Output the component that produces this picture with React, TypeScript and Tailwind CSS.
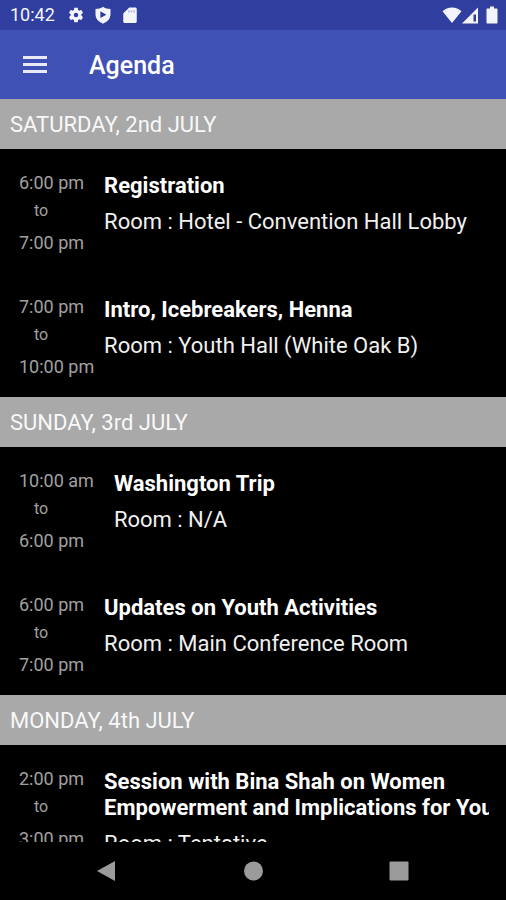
import { Fragment } from "react";

const DAYS = [
  {
    label: "SATURDAY, 2nd JULY",
    sessions: [
      { start: "6:00 pm", end: "7:00 pm", title: "Registration", room: "Hotel - Convention Hall Lobby" },
      { start: "7:00 pm", end: "10:00 pm", title: "Intro, Icebreakers, Henna", room: "Youth Hall (White Oak B)" },
    ],
  },
  {
    label: "SUNDAY, 3rd JULY",
    sessions: [
      { start: "10:00 am", end: "6:00 pm", title: "Washington Trip", room: "N/A" },
      { start: "6:00 pm", end: "7:00 pm", title: "Updates on Youth Activities", room: "Main Conference Room" },
    ],
  },
  {
    label: "MONDAY, 4th JULY",
    sessions: [
      {
        start: "2:00 pm",
        end: "3:00 pm",
        title: "Session with Bina Shah on Women\nEmpowerment and Implications for Youth",
        room: "Tentative",
      },
    ],
  },
];

function StatusBar() {
  return (
    <div className="flex h-[30px] shrink-0 items-center justify-between bg-[#303f9f] pr-2 pl-[10px] text-[#f4f5fc]">
      <div className="flex items-center gap-[9px]">
        <span className="mr-[3px] text-[18px] leading-[24px]">10:42</span>
        {/* settings */}
        <svg className="size-[18px]" viewBox="0 0 24 24" fill="currentColor">
          <path d="M19.140 12.940c.04-.3.06-.61.06-.94 0-.32-.02-.64-.07-.94l2.030-1.580a.49.49 0 0 0 .12-.61l-1.920-3.320a.49.49 0 0 0-.59-.22l-2.390.96c-.5-.38-1.030-.7-1.620-.94l-.36-2.540a.48.48 0 0 0-.48-.41h-3.840a.47.47 0 0 0-.47.41l-.36 2.540c-.59.24-1.130.57-1.620.94l-2.390-.96a.48.48 0 0 0-.59.22L2.740 8.870a.48.48 0 0 0 .12.61l2.030 1.580c-.05.3-.09.63-.09.94s.02.64.07.94l-2.030 1.580a.49.49 0 0 0-.12.61l1.920 3.320c.12.22.37.29.59.22l2.390-.96c.5.38 1.030.7 1.620.94l.36 2.540c.05.24.24.41.48.41h3.840c.24 0 .44-.17.47-.41l.36-2.540c.59-.24 1.130-.56 1.620-.94l2.390.96c.22.08.47 0 .59-.22l1.920-3.320a.48.48 0 0 0-.12-.61zM12 15a3 3 0 1 1 0-6 3 3 0 0 1 0 6z" />
        </svg>
        {/* play protect */}
        <svg className="size-[18px]" viewBox="0 0 24 24" fill="currentColor" fillRule="evenodd">
          <path d="M12 1C9.500 3 6 4 2 4v7c0 6 4 10 10 12.500C18 21 22 17 22 11V4c-4 0-7.500-1-10-3zM8.500 7v9l8-4.500z" />
        </svg>
        {/* sd card */}
        <svg className="size-[18px]" viewBox="0 0 24 24" fill="currentColor">
          <path d="M20 2h-9L3 10v10.500C3 21.600 3.900 22.500 5 22.500h14c1.100 0 2-.9 2-2V4c0-1.100-.9-2-2-2z" />
          <path d="M9.500 5.500h2v3h-2zM13 5.500h2v3h-2zM16.500 5.500h2v3h-2z" fill="#303f9f" fillOpacity=".35" />
        </svg>
      </div>
      <div className="flex items-center">
        <svg className="h-[18px] w-5" viewBox="0 0 20 18" fill="currentColor">
          <path d="M10 17 .5 5.200C3 3 6.300 1.500 10 1.500S17 3 19.500 5.200z" />
        </svg>
        <svg className="h-[18px] w-[17px]" viewBox="0 0 17 18" fill="currentColor" fillRule="evenodd">
          <path d="M0 17.500 16 1.500v16zM11.500 8.500v7h2.500v-7z" />
        </svg>
        <svg className="ml-[7px] h-[18px] w-[12px]" viewBox="0 0 12 18" fill="currentColor">
          <path d="M4 .5h4v2h2.500c.6 0 1 .4 1 1v13c0 .6-.4 1-1 1h-9c-.6 0-1-.4-1-1v-13c0-.6.4-1 1-1H4z" />
        </svg>
      </div>
    </div>
  );
}

function AppBar() {
  return (
    <header className="flex h-[69px] shrink-0 items-center gap-[42px] bg-[#3f51b5] pl-[23px] text-white">
      <button aria-label="Open menu" className="flex w-6 flex-col gap-[4px]">
        <span className="h-[3px] w-full bg-[#e8eaf8]" />
        <span className="h-[3px] w-full bg-[#e8eaf8]" />
        <span className="h-[3px] w-full bg-[#e8eaf8]" />
      </button>
      <h1 className="pt-[2px] text-[25px] leading-[32px] font-medium">Agenda</h1>
    </header>
  );
}

function NavBar() {
  return (
    <nav className="flex h-[58px] shrink-0 items-center justify-center gap-[126px] bg-black text-[#9b9b9b]">
      <button aria-label="Back">
        <svg className="size-5" viewBox="0 0 20 20" fill="currentColor">
          <path d="M18 0v20L0 10z" />
        </svg>
      </button>
      <button aria-label="Home">
        <svg className="size-5" viewBox="0 0 20 20" fill="currentColor">
          <circle cx="10.500" cy="10" r="9.500" />
        </svg>
      </button>
      <button aria-label="Recent apps">
        <svg className="size-5" viewBox="0 0 20 20" fill="currentColor">
          <rect x=".5" y=".5" width="19" height="19" rx="1" />
        </svg>
      </button>
    </nav>
  );
}

export default function App() {
  return (
    <div className="flex h-screen flex-col overflow-hidden bg-black font-['Roboto',sans-serif]">
      <StatusBar />
      <AppBar />

      <main className="min-h-0 flex-1 overflow-hidden">
        {DAYS.map((day) => (
          <Fragment key={day.label}>
            <h2 className="h-[50px] bg-[#a9a9a9] px-[10px] text-[22px] leading-[52px] text-[#f8f8f8]">{day.label}</h2>
            {day.sessions.map((s) => (
              <article key={s.title} className="flex min-h-[124px] gap-5 pr-[17px] pl-[19px]">
                {/* only the start time sets the column width */}
                <div className="shrink-0 pt-[22px] text-[18px] leading-[24px] whitespace-nowrap text-[#a0a0a0]">
                  <div>{s.start}</div>
                  <div className="mt-1 ml-[15px] w-0 text-[16px]">to</div>
                  <div className="mt-2 w-0">{s.end}</div>
                </div>
                <div className="min-w-0 flex-1 overflow-hidden pt-6 text-[22px] leading-[26px] text-white">
                  <h3 className="font-bold whitespace-pre">{s.title}</h3>
                  <p className="mt-[10px] text-[#f0f0f0]">Room : {s.room}</p>
                </div>
              </article>
            ))}
          </Fragment>
        ))}
      </main>

      <NavBar />
    </div>
  );
}
